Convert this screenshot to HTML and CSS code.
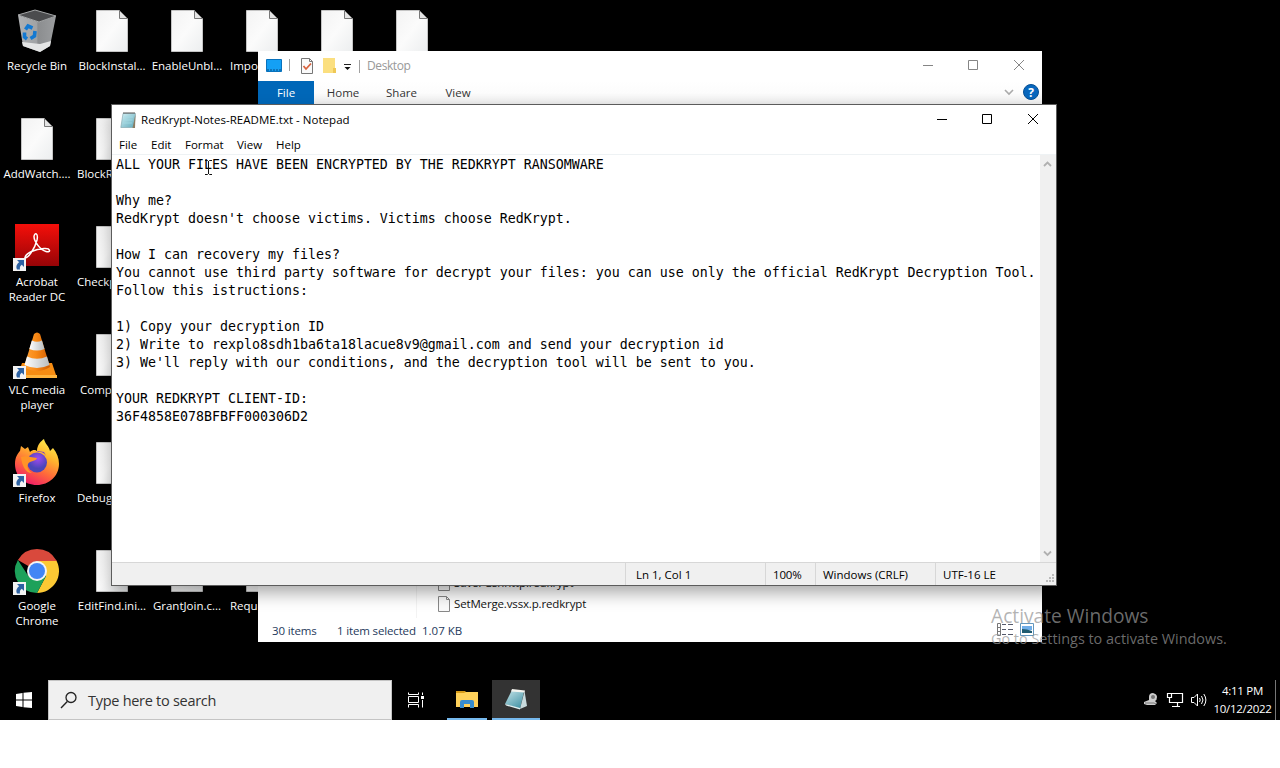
FILE: index.html
```html
<!DOCTYPE html>
<html lang="en">
<head>
<meta charset="utf-8">
<title>Desktop</title>
<link rel="stylesheet" href="styles.css">
</head>
<body>
<svg class="defs" width="0" height="0" aria-hidden="true">
  <defs>
    <linearGradient id="paper" x1="0" y1="0" x2="1" y2="1"><stop offset="0" stop-color="#f3f3f3"/><stop offset=".5" stop-color="#fbfbfb"/><stop offset="1" stop-color="#eceeef"/></linearGradient>
    <linearGradient id="acro" x1="0" y1="0" x2="0" y2="1"><stop offset="0" stop-color="#f50f0a"/><stop offset="1" stop-color="#960407"/></linearGradient>
    <linearGradient id="cone" x1="0" x2="1"><stop offset="0" stop-color="#ffa338"/><stop offset=".45" stop-color="#f98a16"/><stop offset="1" stop-color="#cf5c02"/></linearGradient>
    <linearGradient id="band" x1="0" x2="1"><stop offset="0" stop-color="#fff"/><stop offset="1" stop-color="#b9bdbf"/></linearGradient>
    <linearGradient id="fox" x1=".8" y1="0" x2=".3" y2="1"><stop offset="0" stop-color="#fff44f"/><stop offset=".35" stop-color="#ffb32e"/><stop offset=".65" stop-color="#ff6a3a"/><stop offset="1" stop-color="#f0196a"/></linearGradient>
    <radialGradient id="globe" cx=".55" cy=".3"><stop offset="0" stop-color="#a04af0"/><stop offset="1" stop-color="#4b46b8"/></radialGradient>
    <linearGradient id="note" x1="0" y1="0" x2="1" y2="1"><stop offset="0" stop-color="#d4f1f5"/><stop offset="1" stop-color="#5fa9ba"/></linearGradient>
    <linearGradient id="pad" x1="0" y1="0" x2=".7" y2="1"><stop offset="0" stop-color="#c9e6ea"/><stop offset="1" stop-color="#4796a8"/></linearGradient>
    <linearGradient id="bin" x1="0" x2="1"><stop offset="0" stop-color="#b0b2b4"/><stop offset=".5" stop-color="#a0a2a4"/><stop offset=".52" stop-color="#8b8d8f"/><stop offset="1" stop-color="#9c9ea0"/></linearGradient>
    <symbol id="file" viewBox="0 0 48 48">
      <path d="M8.500 3.500H31.500L39.500 11.500V44.500H8.500Z" fill="url(#paper)" stroke="#c4c4c4"/>
      <path d="M31.500 3.500V11.500H39.500Z" fill="#e4e4e4" stroke="#777"/>
    </symbol>
    <symbol id="link" viewBox="0 0 13 13">
      <path d="M0 0H13V13H0Z" fill="#f3f3f3"/>
      <path d="M4 2H11V9L8.800 6.800C7 8 6.600 9.500 7 11.500H4C2.500 8.500 4 5.800 6.200 4.300Z" fill="#2d62a3"/>
    </symbol>
  </defs>
</svg>
<main class="desktop">
  <section class="icons">
    <div class="item c1 r1">
      <svg viewBox="0 0 48 48"><path d="M5 8L10 39L27 45L37 39L43 9L26 15Z" fill="url(#bin)"/><path d="M9 35L10 39L27 45L37 39L38 34L27 37Z" fill="#e4e5e5"/><path d="M5 8L22 3L43 9L26 15Z" fill="#4b4c4e" stroke="#a5a7a8" stroke-width="1"/><g fill="none" stroke="#1479d1" stroke-width="3.600"><path d="M12.500 22.500L15 19L19.500 21"/><path d="M22 24L21.500 29L17.500 31.500"/><path d="M14 32L11.500 30V25.500"/></g></svg>
      <span>Recycle Bin</span>
    </div>
    <div class="item c1 r2"><svg><use href="#file"/></svg><span>AddWatch....</span></div>
    <div class="item c1 r3">
      <svg viewBox="0 0 48 48"><path d="M2 1H46V43H2Z" fill="url(#acro)"/><path d="M12 34.500C13 30 22 26 31 25.500C38 25 38 30 33 28.500C27 27 21 18 21 13.500C21.500 9 25.500 10 24 17C22 25 15 36 12 34.500Z" fill="none" stroke="#fff" stroke-width="1.500"/><use href="#link" x="0" y="35" width="13" height="13"/></svg>
      <span>Acrobat<br>Reader DC</span>
    </div>
    <div class="item c1 r4">
      <svg viewBox="0 0 48 48"><path d="M9 32H39L44 47H4Z" fill="#f68c12"/><path d="M4 44H44V47H4Z" fill="#ffb33c"/><path d="M21 3Q24 0 27 3L37 36Q24 44 11 36Z" fill="url(#cone)"/><path d="M18.800 9.500Q24 12 29 9.500L31.500 18Q24 21 16.300 18Z" fill="url(#band)"/><path d="M14 25.500Q24 30 34 25.500L36.500 34Q24 40 11.500 34Z" fill="url(#band)"/><use href="#link" x="0" y="35" width="13" height="13"/></svg>
      <span>VLC media<br>player</span>
    </div>
    <div class="item c1 r5">
      <svg viewBox="0 0 48 48"><path d="M24 46C11 46 2 37 2 25C2 18 5 14 7 12L8 7L12 10L15 8L17 13C20 10 23 11 24 12C24 6 28 2 31 0C32 5 36 7 37 12L40 9C44 14 46 19 46 25C46 37 36 46 24 46Z" fill="url(#fox)"/><circle cx="24" cy="23.500" r="10" fill="url(#globe)"/><path d="M8 18C13 16 17 18 24 19C23 23 17 21 15 25C13 29 17 33 19 34C12 34 9 26 8 18Z" fill="#ff9427"/><path d="M24 13Q30 12 33 17L31 13L25 12Z" fill="#7c38c9"/><use href="#link" x="0" y="35" width="13" height="13"/></svg>
      <span>Firefox</span>
    </div>
    <div class="item c1 r6">
      <svg viewBox="0 0 48 48"><path d="M24 24L4.900 13A22 22 0 0 1 43.100 13L44 14H24Z" fill="#d9493c"/><path d="M24 14H43.600A22 22 0 0 1 24 46L33 29Z" fill="#fcc934"/><path d="M4.900 13L15.300 29L33 29L24 46A22 22 0 0 1 4.900 13Z" fill="#1da15a"/><circle cx="24" cy="24" r="10" fill="#f4f4f4"/><circle cx="24" cy="24" r="8" fill="#4285f4"/><use href="#link" x="0" y="35" width="13" height="13"/></svg>
      <span>Google<br>Chrome</span>
    </div>
    <div class="item c2 r1"><svg><use href="#file"/></svg><span>BlockInstal...</span></div>
    <div class="item c2 r2 cut"><svg><use href="#file"/></svg><span>BlockR</span></div>
    <div class="item c2 r3 cut"><svg><use href="#file"/></svg><span>Checkp</span></div>
    <div class="item c2 r4 cut more"><svg><use href="#file"/></svg><span>Comp</span></div>
    <div class="item c2 r5 cut"><svg><use href="#file"/></svg><span>Debug</span></div>
    <div class="item c2 r6"><svg><use href="#file"/></svg><span>EditFind.ini...</span></div>
    <div class="item c3 r1"><svg><use href="#file"/></svg><span>EnableUnbl...</span></div>
    <div class="item c3 r6"><svg><use href="#file"/></svg><span>GrantJoin.c...</span></div>
    <div class="item c4 r1 cut more"><svg><use href="#file"/></svg><span>Impo</span></div>
    <div class="item c4 r6 cut more"><svg><use href="#file"/></svg><span>Reque</span></div>
    <div class="item c5 r1"><svg><use href="#file"/></svg></div>
    <div class="item c6 r1"><svg><use href="#file"/></svg></div>
  </section>

  <section class="window explorer">
    <header class="ex-title">
      <svg width="100" height="30" viewBox="0 0 100 30"><path d="M8.500 8.500H23.500V20.500H8.500Z" fill="#14a0f5" stroke="#0872bd"/><path d="M9 19H23" stroke="#0a4b80" stroke-dasharray="2 1"/><path d="M31.500 8V20" stroke="#a0a0a0"/><path d="M43.500 7.500H51.500L54.500 10.500V22.500H43.500Z" fill="#fafafa" stroke="#777"/><path d="M51.500 7.500V10.500H54.500" fill="none" stroke="#777"/><path d="M45.500 15L48 18L53 12.500" fill="none" stroke="#d8623d" stroke-width="1.800"/><path d="M65 7H77V17H78V22H65Z" fill="#fbdf7f"/><path d="M75 17H78V22H75Z" fill="#efc856"/><path d="M86 13.500H93" stroke="#222"/><path d="M86.500 16H92.500L89.500 19Z" fill="#111"/></svg>
      <i class="bar"></i><span class="ex-name">Desktop</span>
      <svg class="controls" width="110" height="30" viewBox="0 0 110 30"><g fill="none" stroke="#858585"><path d="M5 14.500H15M50.500 9.500H59.500V18.500H50.500ZM96 9L106 19M106 9L96 19"/></g></svg>
    </header>
    <nav class="ribbon">
      <span class="tab-file">File</span><span class="tab">Home</span><span class="tab share">Share</span><span class="tab last">View</span>
      <svg width="48" height="24" viewBox="0 0 48 24"><path d="M11 9L15 13L19 9" fill="none" stroke="#aaa" stroke-width="1.600"/><circle cx="37" cy="11" r="7.500" fill="#0867bd" stroke="#064f94"/></svg>
      <b class="help">?</b>
    </nav>
    <div class="ex-body">
      <div class="tree"></div>
      <ul class="files">
        <li><svg width="12" height="16" viewBox="0 0 12 16"><path d="M.5 .5H8.500L11.500 3.500V15.500H.5Z" fill="#fafafa" stroke="#888"/></svg><span>SavePushhttp.redkrypt</span></li>
        <li><svg width="12" height="16" viewBox="0 0 12 16"><path d="M.5 .5H8.500L11.500 3.500V15.500H.5Z" fill="#fafafa" stroke="#888"/><path d="M8.500 .5V3.500H11.500" fill="none" stroke="#888"/></svg><span class="merge">SetMerge.vssx.p.redkrypt</span></li>
      </ul>
    </div>
    <footer class="ex-status">
      <span class="s-items">30 items</span><span class="s-sel">1 item selected</span><span class="s-size">1.07 KB</span>
      <svg class="views" width="40" height="16" viewBox="0 0 40 16"><path d="M.5 1.500H3.500V13.500H.5ZM.5 5.500H3.500M.5 9.500H3.500" fill="none" stroke="#777"/><path d="M5 2.500H9M11 2.500H16M5 7.500H9M11 7.500H16M5 12.500H9M11 12.500H16" stroke="#555a6b"/><path d="M23.500 1.500H36.500V13.500H23.500Z" fill="#fff" stroke="#6497bd"/><path d="M25 4H35V8H25Z" fill="#70aee8"/><path d="M25 7L30 7.500L35 9V11H25Z" fill="#205b70"/></svg>
    </footer>
  </section>

  <section class="window notepad">
    <header class="np-title">
      <svg width="16" height="18" viewBox="0 0 16 18"><path d="M3 2.500H15.500L14 16.500H.8Z" fill="url(#note)" stroke="#7aa0a8" stroke-width=".6"/><path d="M15.500 3L15 17H12.500Z" fill="#8c7d63"/><path d="M4 1V3M6 1V3M8 1V3M10 1V3M12 1V3M14 1V3" stroke="#555"/><path d="M4 6H13M3.500 9H12.500M3 12H12" stroke="#a5dce6" stroke-width=".7"/></svg>
      <span class="np-name">RedKrypt-Notes-README.txt - Notepad</span>
      <svg class="controls" width="114" height="30" viewBox="0 0 114 30"><g fill="none" stroke="#000"><path d="M0 14.500H10"/><path d="M45.500 9.500H54.500V18.500H45.500ZM91 9L101 19M101 9L91 19"/></g></svg>
    </header>
    <nav class="menu"><span class="m1">File</span><span class="m2">Edit</span><span class="m3">Format</span><span class="m4">View</span><span>Help</span></nav>
    <div class="editor">
<pre class="text">ALL YOUR FILES HAVE BEEN ENCRYPTED BY THE REDKRYPT RANSOMWARE

Why me?
RedKrypt doesn't choose victims. Victims choose RedKrypt.

How I can recovery my files?
You cannot use third party software for decrypt your files: you can use only the official RedKrypt Decryption Tool.
Follow this istructions:

1) Copy your decryption ID
2) Write to rexplo8sdh1ba6ta18lacue8v9@gmail.com and send your decryption id
3) We'll reply with our conditions, and the decryption tool will be sent to you.

YOUR REDKRYPT CLIENT-ID:
36F4858E078BFBFF000306D2</pre>
      <div class="scroll">
        <svg width="16" height="17" viewBox="0 0 16 17"><path d="M4 11L7.500 7.500L11 11" fill="none" stroke="#b0b0b0" stroke-width="1.800"/></svg>
        <svg width="16" height="17" viewBox="0 0 16 17"><path d="M4 6.500L7.500 10L11 6.500" fill="none" stroke="#b0b0b0" stroke-width="1.800"/></svg>
      </div>
      <svg class="cursor" width="9" height="16" viewBox="0 0 9 16"><path d="M1 .5H3.500L4.500 1.500L5.500 .5H8M4.500 1V14M1 14.500H3.500L4.500 13.500L5.500 14.500H8" fill="none" stroke="#111"/></svg>
    </div>
    <footer class="np-status"><span class="s0"></span><span class="s1">Ln 1, Col 1</span><span class="s2">100%</span><span class="s3">Windows (CRLF)</span><span class="s4">UTF-16 LE</span>
      <svg width="12" height="12" viewBox="0 0 12 12"><path d="M8 1H10V3H8ZM5 4H7V6H5ZM8 4H10V6H8ZM2 7H4V9H2ZM5 7H7V9H5ZM8 7H10V9H8Z" fill="#bbb"/></svg>
    </footer>
  </section>

  <aside class="watermark"><span class="w1">Activate Windows</span><span class="w2">Go to Settings to activate Windows.</span></aside>

  <footer class="taskbar">
    <div class="start"><svg width="16" height="16" viewBox="0 0 16 16"><path d="M0 2L6.500 1V7.500H0ZM7.500 .8L16 0V7.500H7.500ZM0 8.500H6.500V15L0 14ZM7.500 8.500H16V16L7.500 15.200Z" fill="#fff"/></svg></div>
    <div class="search"><svg width="18" height="18" viewBox="0 0 18 18"><circle cx="11" cy="6.500" r="5" fill="none" stroke="#222" stroke-width="1.300"/><path d="M7.300 10.500L1 17" stroke="#222" stroke-width="1.400"/></svg><span>Type here to search</span></div>
    <div class="task"><svg width="18" height="16" viewBox="0 0 18 16"><path d="M1.500 .5V2.500H11.500V.5M1.500 15.500V12.500H11.500V15.500M1.500 4.500H11.500V10.500H1.500ZM15.500 .5V3M15.500 8V15.500" fill="none" stroke="#fff"/><path d="M14 4H17V7H14Z" fill="#fff"/></svg></div>
    <div class="app folder"><svg width="22" height="18" viewBox="0 0 22 18"><path d="M0 1H9L11 3H0Z" fill="#d79b19"/><path d="M0 3H8L10 2H22V17H0Z" fill="#ffd15b"/><path d="M4 18V12Q4 10 6 10H16Q18 10 18 12V18H14V14H8V18Z" fill="#378cce"/></svg></div>
    <div class="app active"><svg width="24" height="24" viewBox="0 0 24 24"><path d="M8 3L20 4.500L16 22L1 17Z" fill="url(#pad)"/><path d="M20.500 4L23 19L16 22Z" fill="#c8dadd"/><path d="M8 2L21 3.500L20.500 5.500L7 4.500Z" fill="#f4f4ef"/><path d="M1 17L16 21V22.500L2 18.500Z" fill="#e2f0f1"/></svg></div>
    <div class="tray"><svg width="66" height="18" viewBox="0 0 66 18"><path d="M1 11L6 9V6Q6 2 10 2Q14 3 14 6Q14 9 12 10L14 12L12 14H4L1 13Z" fill="#ccc"/><circle cx="10" cy="6" r="2" fill="#777"/><path d="M2 12H11L13 13" stroke="#777" fill="none"/><path d="M29 2.500H39.500V11.500H26.500V7M34.500 12V15M29 15.500H37M24.500 2.500H28.500V6.500H24.500ZM26.500 7V11" fill="none" stroke="#fff" stroke-width="1.200"/><path d="M48.500 6.500H51L54.500 3V15L51 11.500H48.500ZM56.500 7Q58 9 56.500 11M58.500 5Q61.500 9 58.500 13M60.800 3Q65 9 60.800 15" fill="none" stroke="#fff"/></svg></div>
    <div class="clock"><span class="time">4:11 PM</span><span class="date">10/12/2022</span></div>
    <i class="peek"></i>
  </footer>
</main>
</body>
</html>
```

FILE: styles.css
```css
* { box-sizing: border-box; }
body { margin: 0; background: #fff; font: 11.5px "Open Sans", "Noto Sans", sans-serif; }
span { white-space: nowrap; }
svg { flex: none; display: block; }
.defs { position: absolute; }
.desktop { position: relative; width: 1280px; height: 720px; overflow: hidden; background: #000; }

.icons { display: grid; grid-template-columns: repeat(6, 75px); grid-template-rows: repeat(6, 108px); }
.item { display: flex; flex-direction: column; align-items: center; padding: 7px 1px 0 0; color: #fff; text-align: center; line-height: 15px; }
.item svg { width: 48px; height: 48px; margin-bottom: 3px; }
.cut span { align-self: flex-start; padding-left: 2px; }
.more span { padding-left: 5px; }
.c1 { grid-column: 1; } .c2 { grid-column: 2; } .c3 { grid-column: 3; }
.c4 { grid-column: 4; } .c5 { grid-column: 5; } .c6 { grid-column: 6; }
.r1 { grid-row: 1; } .r2 { grid-row: 2; } .r3 { grid-row: 3; }
.r4 { grid-row: 4; } .r5 { grid-row: 5; } .r6 { grid-row: 6; }

.window { position: absolute; display: flex; flex-direction: column; background: #fff; }
.controls { margin-left: auto; }
.explorer { left: 258px; top: 51px; width: 784px; height: 591px; }
.ex-title { display: flex; align-items: center; height: 30px; color: #999; font-size: 12px; }
.ex-title .bar { width: 1px; height: 13px; margin: 0 7px 0 1px; background: #a0a0a0; }
.ex-title .controls { margin-right: 14px; }
.ex-name { padding-bottom: 1px; letter-spacing: -.4px; }
.ribbon { position: relative; display: flex; height: 24px; line-height: 24px; color: #333; background: linear-gradient(#fff, #fcfcfc 50%, #ececec); }
.tab-file { width: 56px; text-align: center; color: #fff; background: #0067b8; }
.tab { width: 58px; text-align: center; }
.share { width: 59px; }
.last { width: 54px; }
.ribbon svg { margin-left: auto; }
.help { position: absolute; right: 7px; top: 0; width: 8px; text-align: center; color: #fff; font-size: 12px; line-height: 23px; }
.ex-body { display: flex; flex: 1; }
.tree { width: 159px; border-right: 1px solid #f3f3f3; }
.files { display: flex; flex: 1; flex-direction: column; justify-content: flex-end; margin: 0; padding: 0 0 4px 21px; list-style: none; color: #111; letter-spacing: -.15px; }
.files li { display: flex; align-items: center; gap: 4px; height: 21px; }
.ex-status { display: flex; align-items: center; height: 24px; padding-left: 14px; color: #1e395b; letter-spacing: -.15px; }
.s-items { width: 65px; }
.s-sel { width: 85px; }
.s-size { letter-spacing: 0; }
.views { margin: 0 5px 0 auto; }

.notepad { left: 112px; top: 105px; width: 944px; height: 480px; box-shadow: 0 0 0 1px #5c5c5c, 0 8px 16px rgba(0,0,0,.34); color: #000; }
.np-title { display: flex; align-items: center; height: 30px; padding: 0 5px 0 8px; }
.np-name { margin-left: 5px; padding-bottom: 2px; letter-spacing: .03px; }
.menu { display: flex; height: 19px; padding-left: 7px; line-height: 20px; }
.m1 { width: 32px; } .m2 { width: 34px; } .m3 { width: 52px; } .m4 { width: 39px; }
.editor { position: relative; display: flex; flex: 1; border-top: 1px solid #eef2f4; }
.text { flex: 1; min-width: 0; margin: 0; padding: 1px 0 0 4px; font: 13.295px/18px "DejaVu Sans Mono", monospace; }
.scroll { display: flex; flex: none; flex-direction: column; justify-content: space-between; width: 16px; background: #f0f0f0; }
.cursor { position: absolute; left: 92px; top: 5px; }
.np-status { display: flex; height: 23px; border-top: 1px solid #d7d7d7; background: #f0f0f0; line-height: 23px; }
.np-status span { padding-left: 7px; border-left: 1px solid #d7d7d7; }
.np-status .s0 { width: 513px; border: 0; }
.np-status .s1 { width: 140px; padding-left: 10px; }
.np-status .s2 { width: 50px; letter-spacing: -.2px; }
.np-status .s3 { width: 120px; }
.np-status .s4 { width: 109px; }
.np-status svg { align-self: flex-end; }

.watermark { position: absolute; left: 991px; top: 603px; display: flex; flex-direction: column; color: rgba(150,150,150,.72); }
.w1 { font-size: 19.2px; line-height: 26px; }
.w2 { font-size: 14.4px; line-height: 20px; }

.taskbar { position: absolute; left: 0; right: 0; bottom: 0; display: flex; height: 40px; background: #000; }
.start { display: flex; align-items: center; justify-content: center; width: 48px; }
.search { display: flex; align-items: center; gap: 10px; width: 344px; padding-left: 11px; border: 1px solid #c4c4c4; background: #f0f0f0; color: #333; font-size: 14.5px; letter-spacing: -.28px; }
.task { display: flex; align-items: center; width: 55px; padding-left: 15px; }
.app { display: flex; align-items: center; justify-content: center; height: 40px; border-bottom: 2px solid #76b9ed; }
.folder { width: 40px; }
.active { width: 48px; margin-left: 5px; background: #333; }
.tray { display: flex; align-items: center; margin-left: auto; }
.clock { display: flex; flex-direction: column; justify-content: center; align-items: center; width: 66px; padding-left: 1px; color: #fff; line-height: 18px; letter-spacing: -.28px; }
.peek { width: 1px; margin: 0 4px 0 0; background: #777; }
```
